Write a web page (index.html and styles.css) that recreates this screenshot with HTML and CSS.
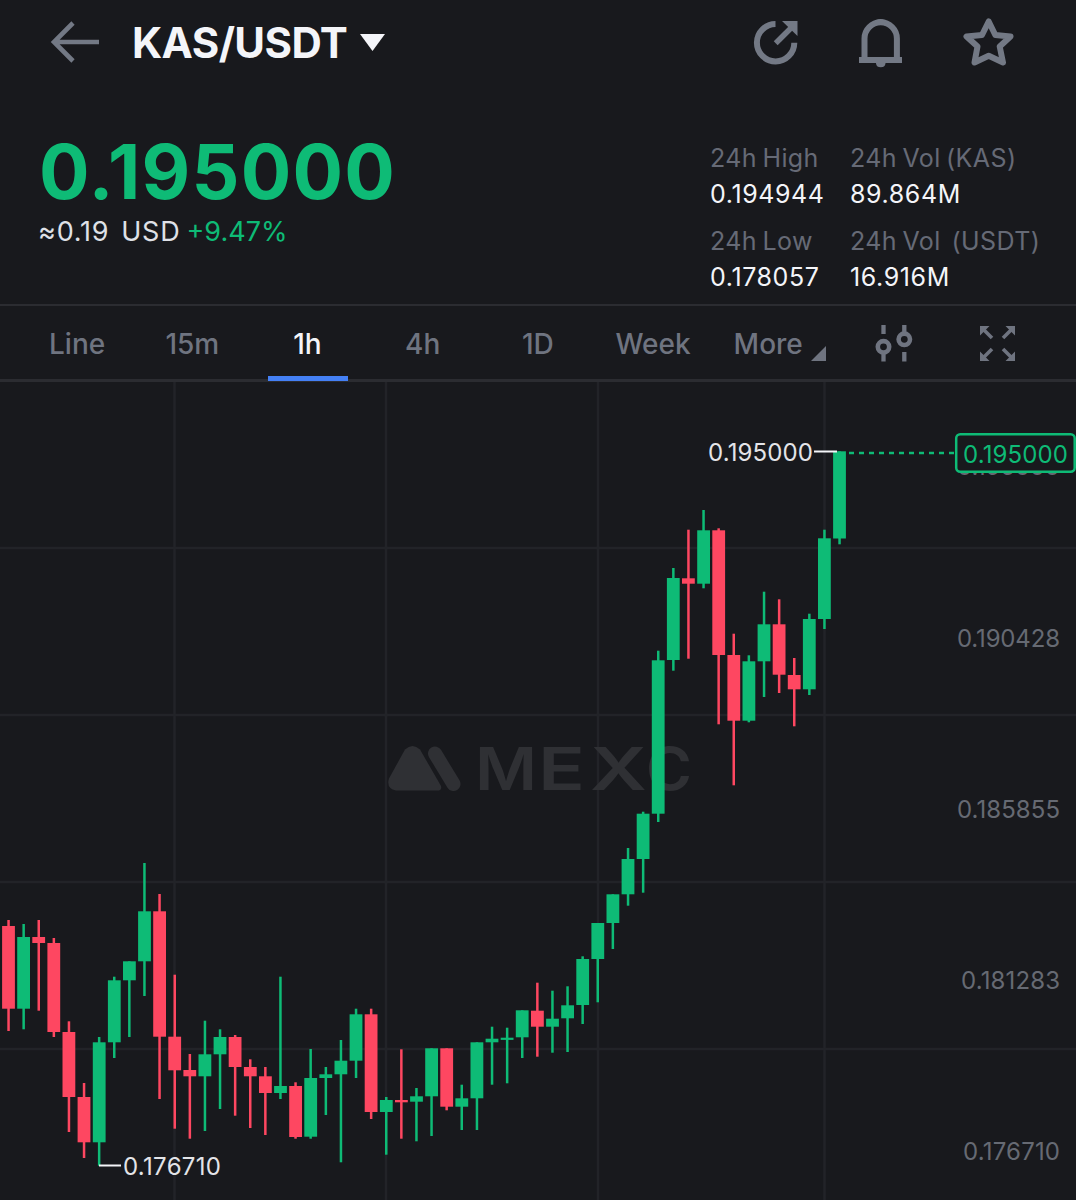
FILE: index.html
```html
<!DOCTYPE html>
<html lang="en">
<head>
  <meta charset="utf-8">
  <title>KAS/USDT</title>
  <meta name="viewport" content="width=device-width, initial-scale=1">
  <link rel="stylesheet" href="styles.css">
</head>
<body>
  <header class="topbar">
    <svg class="back" width="50" height="42" viewBox="0 0 50 42">
      <path d="M23 2 4 21 23 40M4 21H49" fill="none" stroke="currentColor" stroke-width="4.6"/>
    </svg>
    <h1 class="pair">KAS/USDT</h1>
    <svg class="caret" width="25" height="17" viewBox="0 0 25 17"><path d="M0 0H25L12.5 17Z" fill="currentColor"/></svg>

    <div class="actions">
      <svg width="46" height="46" viewBox="0 0 46 46">
        <path d="M22.5 4A18.7 18.7 0 1 0 41.3 22.7" fill="none" stroke="currentColor" stroke-width="6"/>
        <path d="M22.7 23.3 38 8" fill="none" stroke="currentColor" stroke-width="5.5"/>
        <path d="M29 1H44.5V16Z" fill="currentColor"/>
      </svg>
      <svg width="44" height="50" viewBox="0 0 44 50">
        <path d="M5.5 41V20.5a16.200 16.200 0 0 1 32.400 0V41" fill="none" stroke="currentColor" stroke-width="6"/>
        <path d="M0 39H43V45H0ZM16 5a5.600 5 0 0 1 11 0ZM17 44h9.500v1.500a4.800 4.500 0 0 1-9.500 0Z" fill="currentColor"/>
      </svg>
      <svg width="52" height="50" viewBox="0 0 52 50">
        <path d="M25.700 3.500 32.300 17 47.500 18.500 36.700 28.500 40 44.500 25.700 37.800 11.500 44.500 14.500 28.500 3.500 18.500 19 17Z" fill="none" stroke="currentColor" stroke-width="6" stroke-linejoin="round"/>
      </svg>
    </div>
  </header>

  <section class="ticker">
    <div class="last">
      <div class="price">0.195000</div>
      <div class="fiat"><span class="usd">≈0.19&nbsp; USD</span> <span class="change">+9.47%</span></div>
    </div>
    <dl class="stats">
      <div>
        <dt>24h High</dt>
        <dd>0.194944</dd>
      </div>
      <div>
        <dt>24h Vol (KAS)</dt>
        <dd>89.864M</dd>
      </div>
      <div>
        <dt>24h Low</dt>
        <dd>0.178057</dd>
      </div>
      <div>
        <dt>24h Vol&nbsp; (USDT)</dt>
        <dd>16.916M</dd>
      </div>
    </dl>
  </section>

  <nav class="intervals">
    <a class="tab">Line</a>
    <a class="tab">15m</a>
    <a class="tab active">1h</a>
    <a class="tab">4h</a>
    <a class="tab">1D</a>
    <a class="tab">Week</a>
    <a class="tab more">More<svg class="corner" width="15" height="15" viewBox="0 0 15 15"><path d="M15 0V15H0Z" fill="currentColor"/></svg></a>
    <svg class="indicators" width="38" height="37" viewBox="0 0 38 37">
      <g fill="none" stroke="currentColor">
        <path d="M8.500 0V9M8.500 28V36.500M29.300 0V8M29.300 27V36.500" stroke-width="4.300"/>
        <circle cx="8.500" cy="21.800" r="5.700" stroke-width="4.600"/>
        <circle cx="29.300" cy="14.300" r="5.700" stroke-width="4.600"/>
      </g>
    </svg>
    <svg class="fullscreen" width="35" height="35" viewBox="0 0 35 35">
      <path d="M4 4 12 12M31 4 23 12M4 31 12 23M31 31 23 23" fill="none" stroke="currentColor" stroke-width="3.600"/>
      <path d="M0 0H9.500L0 9.500ZM35 0V9.500L25.500 0ZM0 35V25.500L9.500 35ZM35 35H25.500L35 25.500Z" fill="currentColor"/>
    </svg>
  </nav>

  <main>
    <!-- user units start at the top of the screen, so y runs 382 to 1200 -->
    <svg class="chart" width="1076" height="818" viewBox="0 382 1076 818">
      <path class="grid" d="M0 548H1076M0 715H1076M0 882H1076M0 1049H1076M174.500 382V1200M386 382V1200M598 382V1200M824.500 382V1200"/>

      <g class="watermark">
        <path d="M405 749.500q7.500-7 15 0L441 786q1 4-2 4.500H396q-10-2-7-12Z"/>
        <path d="M435 753.500 453.500 784" stroke-width="14" stroke-linecap="round"/>
        <text x="475" y="790" textLength="62" lengthAdjust="spacingAndGlyphs">M</text>
        <text x="538" y="790" textLength="47" lengthAdjust="spacingAndGlyphs">E</text>
        <text x="590" y="790" textLength="57" lengthAdjust="spacingAndGlyphs">X</text>
        <text x="646" y="790" textLength="46" lengthAdjust="spacingAndGlyphs">C</text>
      </g>

      <g id="candles"></g>

      <g class="axis">
        <text x="957" y="475" textLength="103">0.195000</text>
        <text x="957" y="647" textLength="103">0.190428</text>
        <text x="957" y="818" textLength="103">0.185855</text>
        <text x="961" y="989" textLength="99">0.181283</text>
        <text x="963" y="1160" textLength="97">0.176710</text>
      </g>

      <g class="extreme">
        <text x="708" y="461" textLength="105">0.195000</text>
        <path d="M814 451.500H837M99 1165.500H121"/>
        <text x="123" y="1175" textLength="98">0.176710</text>
      </g>

      <g class="current">
        <path d="M849 453H955" stroke-dasharray="5 5"/>
        <rect x="956.200" y="434.300" width="118.500" height="37.500" rx="4"/>
        <text x="963" y="462.500" textLength="105">0.195000</text>
      </g>
    </svg>
  </main>

  <script src="chart.js"></script>
</body>
</html>
```
FILE: styles.css
```css
* {
  box-sizing: border-box;
}
body {
  margin: 0;
  height: 1200px;
  overflow: hidden;
  background: #18191d;
  color: #f4f5f9;
  font-family: Inter, "Liberation Sans", sans-serif;
}
svg {
  display: block;
  flex: none;
}

.topbar {
  display: flex;
  align-items: center;
  height: 84px;
  padding: 0 61px 0 50px;
  color: #737985;
}
.pair {
  margin: 2px 0 0 32px;
  width: 215px;
  color: #f4f5f9;
  font-size: 42px;
  font-weight: 700;
  line-height: 50px;
  letter-spacing: -0.6px;
  white-space: nowrap;
}
.caret {
  margin-left: 13px;
  color: #f4f5f9;
}
.actions {
  display: flex;
  align-items: center;
  gap: 60px;
  margin: 1px 0 0 auto;
}

.ticker {
  display: flex;
  justify-content: space-between;
  height: 220px;
  padding: 0 35px 0 39px;
}
.last {
  padding-top: 42px;
}
.price {
  color: #0ebb76;
  font-size: 75px;
  font-weight: 700;
  line-height: 92px;
  letter-spacing: 1.2px;
}
.fiat {
  display: flex;
  gap: 6px;
  margin-left: -1px;
  font-size: 27px;
  line-height: 28px;
  white-space: nowrap;
}
.usd {
  color: #dfe1e7;
  letter-spacing: 0.8px;
  word-spacing: -2.5px;
}
.change {
  color: #0ebb76;
}
.stats {
  display: grid;
  grid-template-columns: 140px 193px;
  grid-auto-rows: 83px;
  margin: 56px -2px 0 0;
  font-size: 25px;
  line-height: 36px;
  white-space: nowrap;
}
.stats dt {
  color: #666a76;
  letter-spacing: 0.4px;
  word-spacing: -2px;
}
.stats dd {
  margin: 0;
  letter-spacing: 0.6px;
}

.intervals {
  display: flex;
  align-items: center;
  height: 78px;
  padding-left: 19.5px;
  border-top: 2px solid #2b2c31;
  border-bottom: 3px solid #2b2c31;
  color: #6f7480;
}
.tab {
  position: relative;
  width: 115.2px;
  height: 73px;
  padding-top: 4px;
  font-size: 28px;
  font-weight: 500;
  line-height: 68px;
  text-align: center;
}
.active {
  color: #f4f5f9;
}
.active::after {
  content: "";
  position: absolute;
  left: 18px;
  bottom: -2px;
  width: 80px;
  height: 5px;
  background: #4480f5;
}
.corner {
  position: absolute;
  right: 0;
  bottom: 18px;
}
.indicators {
  margin: 2px 0 0 49px;
}
.fullscreen {
  margin: 2px 0 0 67px;
}

.grid {
  stroke: #222328;
  stroke-width: 2.5;
}
.watermark {
  fill: #2f3034;
  stroke: #2f3034;
  stroke-width: 0;
}
.watermark text {
  font-size: 59px;
  font-weight: 600;
}
.up {
  fill: #0ebb76;
}
.down {
  fill: #fe4761;
}
.axis,
.extreme,
.current {
  font-size: 24px;
}
.axis {
  fill: #666a73;
}
.extreme {
  fill: #e3e4e8;
  stroke-width: 2;
}
.extreme path {
  stroke: #f4f5f9;
}
.extreme text {
  stroke: none;
}
.current path {
  stroke: #0ebb76;
  stroke-width: 2.5;
}
.current rect {
  fill: #18191d;
  stroke: #0ebb76;
  stroke-width: 2.5;
}
.current text {
  fill: #0ebb76;
}
```
FILE: chart.js
```js
// direction, high, body top, body bottom, low
var candles = [
  ["down", 920, 926, 1008.7, 1031],
  ["up", 924, 937, 1008.7, 1029.3],
  ["down", 920, 937, 943, 1010.7],
  ["down", 938, 943, 1032, 1037],
  ["down", 1021.3, 1032, 1097, 1132],
  ["down", 1083, 1097, 1142.3, 1158],
  ["up", 1037, 1042.3, 1142.3, 1165.7],
  ["up", 976.7, 980.3, 1042.3, 1058],
  ["up", 961.3, 961.3, 980.3, 1037],
  ["up", 863, 911.3, 961.3, 996],
  ["down", 894, 911.3, 1036.7, 1099],
  ["down", 974.7, 1036.7, 1070.3, 1128.7],
  ["down", 1054, 1070, 1076.3, 1138.7],
  ["up", 1020.7, 1054.3, 1076.3, 1131],
  ["up", 1029.3, 1037, 1054.3, 1109],
  ["down", 1035, 1037, 1067, 1115.7],
  ["down", 1059.3, 1067, 1076.3, 1128],
  ["down", 1067, 1076.3, 1093, 1135],
  ["up", 976.7, 1086, 1093, 1099],
  ["down", 1082.3, 1086, 1137, 1138.7],
  ["up", 1049, 1078, 1136.7, 1138.7],
  ["up", 1067, 1074.3, 1078, 1115],
  ["up", 1040, 1060.7, 1074.3, 1162.3],
  ["up", 1008.7, 1014.3, 1060.7, 1078],
  ["down", 1008.7, 1014.3, 1112, 1119],
  ["up", 1097, 1100, 1112, 1154.7],
  ["down", 1049.3, 1100, 1102.3, 1138.7],
  ["up", 1088, 1096.3, 1101.7, 1141.3],
  ["up", 1048.3, 1048.3, 1096.3, 1136],
  ["down", 1048.3, 1048.3, 1106.7, 1110.3],
  ["up", 1084.7, 1098.3, 1106.7, 1130],
  ["up", 1042.3, 1042.3, 1098.3, 1130],
  ["up", 1026.7, 1038.7, 1042.3, 1084.7],
  ["up", 1027.7, 1037.7, 1039.9, 1083.3],
  ["up", 1010.3, 1010.3, 1037.3, 1058],
  ["down", 982.7, 1010.7, 1026.7, 1056.7],
  ["up", 990.7, 1018.7, 1026.7, 1052.7],
  ["up", 986.3, 1005.3, 1018.3, 1052],
  ["up", 956.3, 959, 1005, 1024],
  ["up", 923, 923, 959, 1002.3],
  ["up", 894.3, 894.3, 923, 949],
  ["up", 848, 859, 894.3, 905.7],
  ["up", 811.7, 813.7, 859, 892.7],
  ["up", 650.7, 660.3, 813.7, 822],
  ["up", 568, 578, 660, 670.7],
  ["down", 529.7, 578.3, 583.7, 658.7],
  ["up", 510, 530.3, 583.7, 588.3],
  ["down", 528.3, 530.3, 655, 724.3],
  ["down", 633.7, 655, 720.7, 785.3],
  ["up", 655.3, 661.3, 720.7, 722.3],
  ["up", 591.7, 624.3, 661.3, 697],
  ["down", 599.3, 624.3, 674.7, 693],
  ["down", 658, 675, 689.3, 726.3],
  ["up", 613.7, 619, 689.3, 695],
  ["up", 529.7, 538.3, 619, 629],
  ["up", 451.3, 451.3, 538.5, 544.3]
];

var STEP = 15.11;
var FIRST = 8.5;
var group = document.getElementById("candles");

function addRect(cls, x, top, bottom, width) {
  var r = document.createElementNS("http://www.w3.org/2000/svg", "rect");
  r.setAttribute("class", cls);
  r.setAttribute("x", (x - width / 2).toFixed(1));
  r.setAttribute("y", top);
  r.setAttribute("width", width);
  r.setAttribute("height", (bottom - top).toFixed(1));
  group.appendChild(r);
}

candles.forEach(function (c, i) {
  var x = FIRST + i * STEP;
  addRect(c[0], x, c[1], c[4], 2.5);
  addRect(c[0], x, c[2], c[3], 12.8);
});
```
